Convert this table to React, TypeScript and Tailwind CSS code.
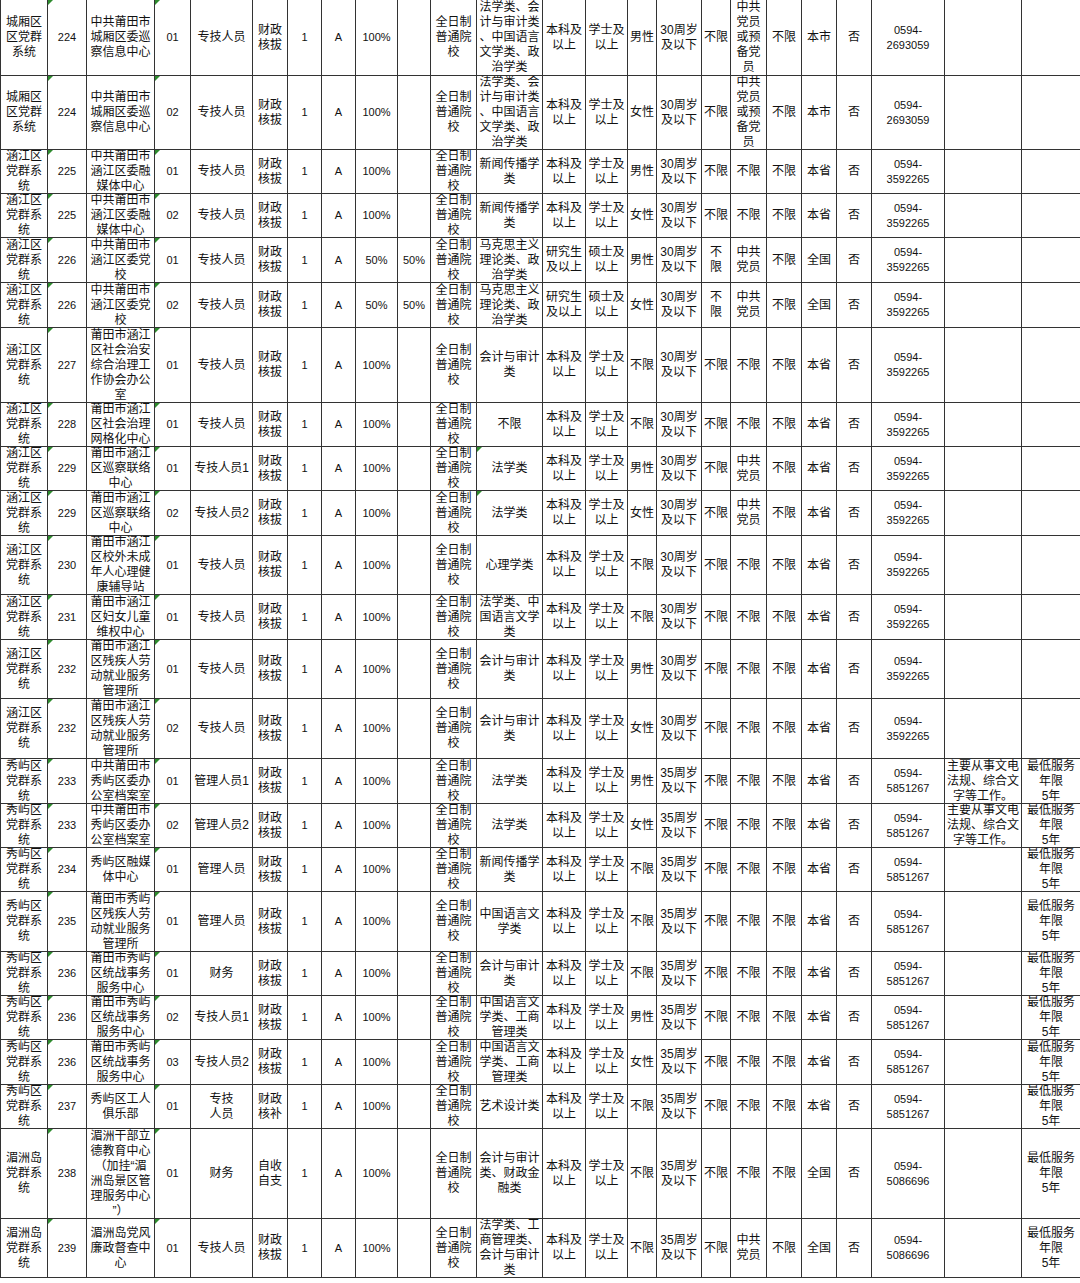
import React from "react";

const COLS =
  "grid grid-cols-[48px_39px_68px_36px_62px_35px_34px_34px_42px_33px_46px_66px_43px_42px_29px_45px_29px_36px_35px_35px_35px_73px_77px_58px]";

type Row = {
  h: string;
  c: string[];
  tri12?: boolean;
};

const base = (
  sys: string,
  code: string,
  unit: string,
  pos: string,
  name: string,
  fund: string,
  p1: string,
  p2: string,
  major: string,
  edu: string,
  deg: string,
  gender: string,
  age: string,
  c17: string,
  pol: string,
  region: string,
  phone: string,
  note: string,
  svc: string
) => [
  sys,
  code,
  unit,
  pos,
  name,
  fund,
  "1",
  "A",
  p1,
  p2,
  "全日制普通院校",
  major,
  edu,
  deg,
  gender,
  age,
  c17,
  pol,
  "不限",
  region,
  "否",
  phone,
  note,
  svc,
];

const CX = "城厢区区党群系统";
const HJ = "涵江区党群系统";
const XY = "秀屿区党群系统";
const MZ = "湄洲岛党群系统";
const BK = "本科及以上";
const XS = "学士及以上";
const A30 = "30周岁及以下";
const A35 = "35周岁及以下";
const FZ = "财政核拔";
const P1 = "0594-|2693059";
const P2 = "0594-|3592265";
const P3 = "0594-|5851267";
const P4 = "0594-|5086696";
const SVC = "最低服务|年限|5年";
const NOTE = "主要从事文电法规、综合文字等工作。";

const rows: Row[] = [
  { h: "h-[76px]", c: base(CX, "224", "中共莆田市城厢区委巡察信息中心", "01", "专技人员", FZ, "100%", "", "法学类、会计与审计类、中国语言文学类、政治学类", BK, XS, "男性", A30, "不限", "中共党员或预备党员", "本市", P1, "", "") },
  { h: "h-[74px]", c: base(CX, "224", "中共莆田市城厢区委巡察信息中心", "02", "专技人员", FZ, "100%", "", "法学类、会计与审计类、中国语言文学类、政治学类", BK, XS, "女性", A30, "不限", "中共党员或预备党员", "本市", P1, "", "") },
  { h: "h-[44px]", c: base(HJ, "225", "中共莆田市涵江区委融媒体中心", "01", "专技人员", FZ, "100%", "", "新闻传播学类", BK, XS, "男性", A30, "不限", "不限", "本省", P2, "", "") },
  { h: "h-[44px]", c: base(HJ, "225", "中共莆田市涵江区委融媒体中心", "02", "专技人员", FZ, "100%", "", "新闻传播学类", BK, XS, "女性", A30, "不限", "不限", "本省", P2, "", "") },
  { h: "h-[45px]", c: base(HJ, "226", "中共莆田市涵江区委党校", "01", "专技人员", FZ, "50%", "50%", "马克思主义理论类、政治学类", "研究生及以上", "硕士及以上", "男性", A30, "不|限", "中共党员", "全国", P2, "", "") },
  { h: "h-[45px]", c: base(HJ, "226", "中共莆田市涵江区委党校", "02", "专技人员", FZ, "50%", "50%", "马克思主义理论类、政治学类", "研究生及以上", "硕士及以上", "女性", A30, "不|限", "中共党员", "全国", P2, "", "") },
  { h: "h-[75px]", c: base(HJ, "227", "莆田市涵江区社会治安综合治理工作协会办公室", "01", "专技人员", FZ, "100%", "", "会计与审计类", BK, XS, "不限", A30, "不限", "不限", "本省", P2, "", "") },
  { h: "h-[44px]", c: base(HJ, "228", "莆田市涵江区社会治理网格化中心", "01", "专技人员", FZ, "100%", "", "不限", BK, XS, "不限", A30, "不限", "不限", "本省", P2, "", "") },
  { h: "h-[44px]", tri12: true, c: base(HJ, "229", "莆田市涵江区巡察联络中心", "01", "专技人员1", FZ, "100%", "", "法学类", BK, XS, "男性", A30, "不限", "中共党员", "本省", P2, "", "") },
  { h: "h-[45px]", tri12: true, c: base(HJ, "229", "莆田市涵江区巡察联络中心", "02", "专技人员2", FZ, "100%", "", "法学类", BK, XS, "女性", A30, "不限", "中共党员", "本省", P2, "", "") },
  { h: "h-[59px]", c: base(HJ, "230", "莆田市涵江区校外未成年人心理健康辅导站", "01", "专技人员", FZ, "100%", "", "心理学类", BK, XS, "不限", A30, "不限", "不限", "本省", P2, "", "") },
  { h: "h-[45px]", c: base(HJ, "231", "莆田市涵江区妇女儿童维权中心", "01", "专技人员", FZ, "100%", "", "法学类、中国语言文学类", BK, XS, "不限", A30, "不限", "不限", "本省", P2, "", "") },
  { h: "h-[59px]", c: base(HJ, "232", "莆田市涵江区残疾人劳动就业服务管理所", "01", "专技人员", FZ, "100%", "", "会计与审计类", BK, XS, "男性", A30, "不限", "不限", "本省", P2, "", "") },
  { h: "h-[60px]", c: base(HJ, "232", "莆田市涵江区残疾人劳动就业服务管理所", "02", "专技人员", FZ, "100%", "", "会计与审计类", BK, XS, "女性", A30, "不限", "不限", "本省", P2, "", "") },
  { h: "h-[45px]", c: base(XY, "233", "中共莆田市秀屿区委办公室档案室", "01", "管理人员1", FZ, "100%", "", "法学类", BK, XS, "男性", A35, "不限", "不限", "本省", P3, NOTE, SVC) },
  { h: "h-[44px]", c: base(XY, "233", "中共莆田市秀屿区委办公室档案室", "02", "管理人员2", FZ, "100%", "", "法学类", BK, XS, "女性", A35, "不限", "不限", "本省", P3, NOTE, SVC) },
  { h: "h-[44px]", c: base(XY, "234", "秀屿区融媒体中心", "01", "管理人员", FZ, "100%", "", "新闻传播学类", BK, XS, "不限", A35, "不限", "不限", "本省", P3, "", SVC) },
  { h: "h-[60px]", c: base(XY, "235", "莆田市秀屿区残疾人劳动就业服务管理所", "01", "管理人员", FZ, "100%", "", "中国语言文学类", BK, XS, "不限", A35, "不限", "不限", "本省", P3, "", SVC) },
  { h: "h-[44px]", c: base(XY, "236", "莆田市秀屿区统战事务服务中心", "01", "财务", FZ, "100%", "", "会计与审计类", BK, XS, "不限", A35, "不限", "不限", "本省", P3, "", SVC) },
  { h: "h-[44px]", c: base(XY, "236", "莆田市秀屿区统战事务服务中心", "02", "专技人员1", FZ, "100%", "", "中国语言文学类、工商管理类", BK, XS, "男性", A35, "不限", "不限", "本省", P3, "", SVC) },
  { h: "h-[45px]", c: base(XY, "236", "莆田市秀屿区统战事务服务中心", "03", "专技人员2", FZ, "100%", "", "中国语言文学类、工商管理类", BK, XS, "女性", A35, "不限", "不限", "本省", P3, "", SVC) },
  { h: "h-[44px]", c: base(XY, "237", "秀屿区工人俱乐部", "01", "专技|人员", "财政核补", "100%", "", "艺术设计类", BK, XS, "不限", A35, "不限", "不限", "本省", P3, "", SVC) },
  { h: "h-[90px]", c: base(MZ, "238", "湄洲干部立德教育中心（加挂“湄洲岛景区管理服务中心”）", "01", "财务", "自收自支", "100%", "", "会计与审计类、财政金融类", BK, XS, "不限", A35, "不限", "不限", "全国", P4, "", SVC) },
  { h: "h-[59px]", c: base(MZ, "239", "湄洲岛党风廉政督查中心", "01", "专技人员", FZ, "100%", "", "法学类、工商管理类、会计与审计类", BK, XS, "不限", A35, "不限", "中共党员", "全国", P4, "", SVC) },
];

function Tri() {
  return (
    <span className="absolute left-0 top-0 h-0 w-0 border-t-[5px] border-r-[5px] border-t-[#2e8b2e] border-r-transparent" />
  );
}

function Cell({ text, idx, tri }: { text: string; idx: number; tri: boolean }) {
  const isNum = /^[0-9A-Z%\-|]+$/.test(text);
  const parts = text.split("|");
  const cls =
    idx === 0
      ? "relative flex items-center justify-center overflow-hidden border-l border-r border-b border-[#333] px-[2px] text-center"
      : idx === 23
      ? "relative flex items-center justify-center overflow-hidden border-b border-[#333] px-[2px] text-center"
      : "relative flex items-center justify-center overflow-hidden border-r border-b border-[#333] px-[2px] text-center";
  return (
    <div className={cls}>
      {tri && <Tri />}
      <div
        className={
          isNum
            ? "w-full text-[11px] leading-[15px] [line-break:anywhere]"
            : "w-full text-[12px] leading-[15px] [line-break:anywhere]"
        }
      >
        {parts.map((p, i) => (
          <React.Fragment key={i}>
            {i > 0 && <br />}
            {p}
          </React.Fragment>
        ))}
      </div>
    </div>
  );
}

export default function App() {
  return (
    <div className="w-[1080px] h-[1283px] bg-white text-[#111] font-['Liberation_Sans','Noto_Sans_CJK_SC',sans-serif]">
      {rows.map((r, ri) => (
        <div key={ri} className={`${COLS} ${r.h}`}>
          {r.c.map((t, ci) => (
            <Cell
              key={ci}
              text={t}
              idx={ci}
              tri={ci === 1 || ci === 3 || (ci === 11 && !!r.tri12)}
            />
          ))}
        </div>
      ))}
    </div>
  );
}
